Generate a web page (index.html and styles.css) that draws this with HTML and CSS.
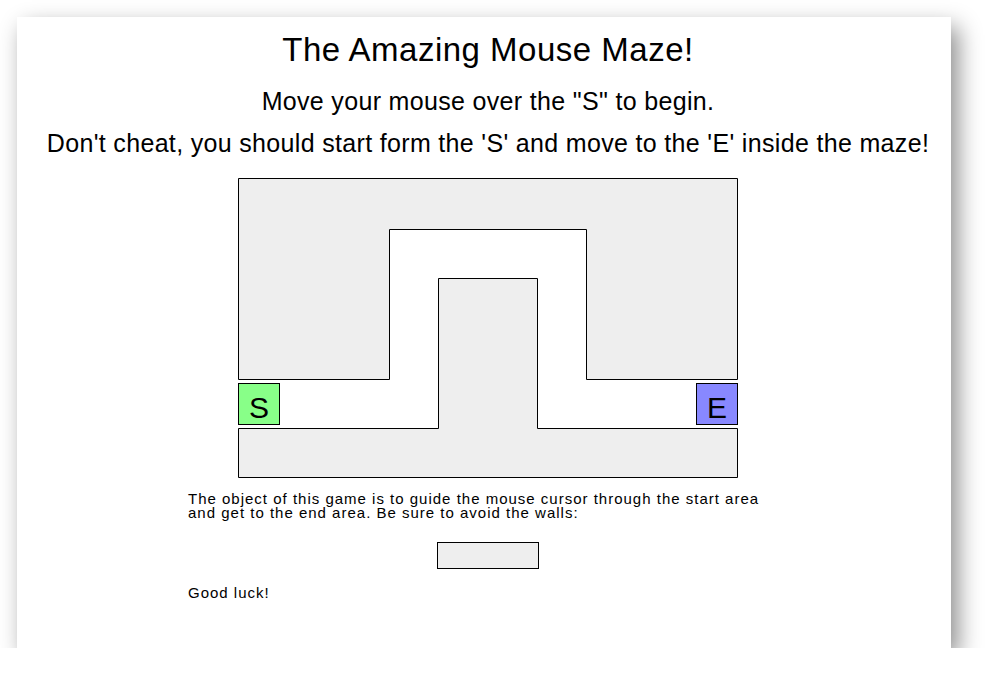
FILE: index.html
```html
<!DOCTYPE html>
<html>
<head>
<meta charset="utf-8">
<title>The Amazing Mouse Maze!</title>
<link rel="stylesheet" href="styles.css">
</head>
<body>
<div class="window">
  <h1 class="title">The Amazing Mouse Maze!</h1>
  <h2 class="line first">Move your mouse over the "S" to begin.</h2>
  <h2 class="line">Don't cheat, you should start form the 'S' and move to the 'E' inside the maze!</h2>
  <div class="maze">
    <svg class="walls" width="500" height="300" viewBox="0 0 500 300">
      <polygon points="0.5,0.5 499.5,0.5 499.5,201.5 348.5,201.5 348.5,51.5 151.5,51.5 151.5,201.5 0.5,201.5" fill="#eeeeee" stroke="#000" stroke-width="1"/>
      <polygon points="0.5,250.5 200.5,250.5 200.5,100.5 299.5,100.5 299.5,250.5 499.5,250.5 499.5,299.5 0.5,299.5" fill="#eeeeee" stroke="#000" stroke-width="1"/>
    </svg>
    <div class="pad start">S</div>
    <div class="pad end">E</div>
  </div>
  <div class="info">
    <p class="desc">The object of this game is to guide the mouse cursor through the start area and get to the end area. Be sure to avoid the walls:</p>
    <div class="sample"></div>
    <p class="luck">Good luck!</p>
  </div>
</div>
</body>
</html>
```
FILE: styles.css
```css
html, body {
  margin: 0;
  padding: 0;
  background: #ffffff;
}
body {
  font-family: "Liberation Sans", Arial, sans-serif;
  color: #000;
}
.window {
  box-sizing: border-box;
  margin: 17px 0 0 17px;
  width: 934px;
  height: 631px;
  padding: 13px 0 0 8px;
  background: #fff;
  box-shadow: 7px 10px 22px rgba(0, 0, 0, 0.45);
}
.title {
  margin: 0;
  font-weight: normal;
  font-size: 33px;
  line-height: 40px;
  letter-spacing: 0.5px;
  text-align: center;
}
.line {
  margin: 12px 0 0 0;
  font-weight: normal;
  font-size: 25px;
  line-height: 30px;
  letter-spacing: 0.33px;
  text-align: center;
}
.line.first {
  margin-top: 16px;
}
.maze {
  position: relative;
  width: 500px;
  height: 300px;
  margin: 20px auto 0 auto;
}
.walls {
  display: block;
}
.pad {
  position: absolute;
  top: 205px;
  width: 40px;
  height: 40px;
  border: 1px solid #000;
  font-family: "Liberation Sans", Arial, sans-serif;
  font-size: 30px;
  line-height: 48px;
  text-align: center;
}
.start {
  left: 0;
  background: #88ff88;
}
.end {
  left: 458px;
  background: #8888ff;
}
.info {
  width: 600px;
  margin: 14px auto 0 auto;
  font-size: 15px;
  letter-spacing: 1px;
}
.desc {
  margin: 0;
  line-height: 14px;
}
.sample {
  width: 100px;
  height: 25px;
  margin: 22px auto 0 auto;
  border: 1px solid #000;
  background: #eeeeee;
}
.luck {
  margin: 16px 0 0 0;
  line-height: 16px;
}
```
